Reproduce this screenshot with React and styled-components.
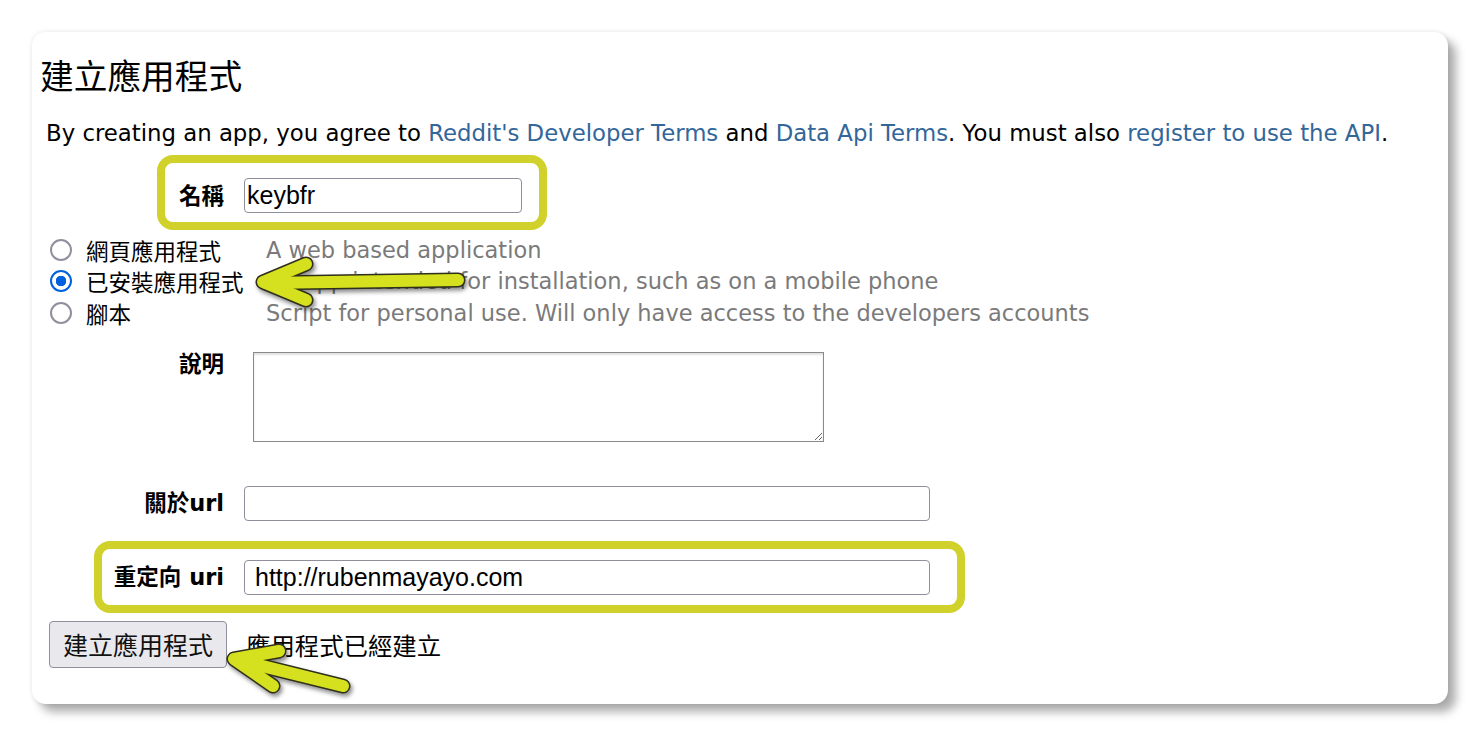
import React from "react";
import styled, { createGlobalStyle } from "styled-components";

const GlobalStyle = createGlobalStyle`
  html, body {
    margin: 0;
    background: #ffffff;
  }
  body {
    font-family: "DejaVu Sans", "Noto Sans CJK TC", sans-serif;
    color: #000;
  }
`;

function App() {
  return (
    <Page>
      <GlobalStyle />
      <Card>
        <Title>建立應用程式</Title>
        <Agreement>
          By creating an app, you agree to <Link href="#">Reddit's Developer Terms</Link> and{" "}
          <Link href="#">Data Api Terms</Link>. You must also{" "}
          <Link href="#">register to use the API</Link>.
        </Agreement>

        <FieldRow top={31}>
          <Label>名稱</Label>
          <TextInput width={278} pad={2} defaultValue="keybfr" />
        </FieldRow>

        <RadioGroup>
          <RadioRow>
            <Radio />
            <RadioLabel>網頁應用程式</RadioLabel>
            <Hint>A web based application</Hint>
          </RadioRow>
          <RadioRow>
            <Radio checked />
            <RadioLabel>已安裝應用程式</RadioLabel>
            <Hint>An app intended for installation, such as on a mobile phone</Hint>
          </RadioRow>
          <RadioRow>
            <Radio />
            <RadioLabel>腳本</RadioLabel>
            <Hint>Script for personal use. Will only have access to the developers accounts</Hint>
          </RadioRow>
        </RadioGroup>

        <FieldRow top={23} align="flex-start">
          <Label offset={-2}>說明</Label>
          <TextArea />
        </FieldRow>

        <FieldRow top={44}>
          <Label>關於url</Label>
          <TextInput width={686} pad={10} />
        </FieldRow>

        <FieldRow top={39}>
          <Label>重定向 uri</Label>
          <TextInput width={686} pad={10} defaultValue="http://rubenmayayo.com" />
        </FieldRow>

        <Actions>
          <Button>建立應用程式</Button>
          <Status>應用程式已經建立</Status>
        </Actions>
      </Card>

      <Callout left={157} top={155} width={390} height={75} />
      <Callout left={94} top={541} width={871} height={72} />

      <Overlay width="1481" height="737" viewBox="0 0 1481 737">
        <Arrow shaft="M458 280 L266 283" head="M306 264 L263 282 L306 300" />
        <Arrow shaft="M343 686 L238 660" head="M279 651 L234 659 L273 686" />
      </Overlay>
    </Page>
  );
}

function Arrow({ shaft, head }) {
  return (
    <g style={{ filter: "drop-shadow(2px 3px 2px rgba(0,0,0,0.45))" }}>
      <path d={shaft} stroke="#2f2f1c" strokeWidth="15" fill="none" strokeLinecap="round" />
      <path d={head} stroke="#2f2f1c" strokeWidth="15" fill="none" strokeLinecap="round" strokeLinejoin="round" />
      <path d={shaft} stroke="#d5e11e" strokeWidth="12" fill="none" strokeLinecap="round" />
      <path d={head} stroke="#d5e11e" strokeWidth="12" fill="none" strokeLinecap="round" strokeLinejoin="round" />
    </g>
  );
}

export default App;

const Page = styled.div`
  position: relative;
  width: 1481px;
  height: 737px;
  padding: 32px;
  box-sizing: border-box;
  overflow: hidden;
`;

const Card = styled.div`
  width: 1416px;
  height: 672px;
  box-sizing: border-box;
  padding: 26px 8px 0 8px;
  background: #fff;
  border-radius: 14px;
  box-shadow: 8px 8px 10px rgba(0, 0, 0, 0.32), 0 0 5px rgba(0, 0, 0, 0.1);
`;

const Title = styled.h1`
  margin: 0;
  font-size: 33.7px;
  line-height: 40px;
  font-weight: normal;
`;

const Agreement = styled.p`
  margin: 21px 0 0 6px;
  font-size: 22.8px;
  line-height: 28px;
`;

const Link = styled.a`
  color: #336699;
  text-decoration: none;
`;

const FieldRow = styled.div`
  display: flex;
  align-items: ${(p) => p.align || "center"};
  gap: 20px;
  margin-top: ${(p) => p.top}px;
`;

const Label = styled.label`
  width: 184px;
  flex-shrink: 0;
  text-align: right;
  font-size: 22.5px;
  font-weight: bold;
  line-height: 28px;
  margin-top: ${(p) => p.offset || 0}px;
`;

const TextInput = styled.input`
  width: ${(p) => p.width}px;
  height: 35px;
  box-sizing: border-box;
  border: 1px solid #8f8f9d;
  border-radius: 4px;
  padding: 0 ${(p) => p.pad}px;
  font-family: "Liberation Sans", Arial, sans-serif;
  font-size: 25px;
  color: #000;
  background: #fff;
  outline: none;
`;

const TextArea = styled.textarea`
  margin-left: 9px;
  width: 571px;
  height: 90px;
  box-sizing: border-box;
  border: 1px solid #8a8a8a;
  box-shadow: inset 0 2px 2px rgba(0, 0, 0, 0.12);
  padding: 4px;
  font-family: "Liberation Sans", Arial, sans-serif;
  font-size: 18px;
  resize: both;
  outline: none;
`;

const RadioGroup = styled.div`
  margin-top: 21px;
  display: flex;
  flex-direction: column;
`;

const RadioRow = styled.div`
  display: flex;
  align-items: center;
  height: 31.5px;
  font-size: 22.5px;
`;

const Radio = styled.span`
  box-sizing: border-box;
  width: 22px;
  height: 22px;
  margin: 0 14px 0 10px;
  border-radius: 50%;
  border: ${(p) => (p.checked ? "2.5px solid #0060df" : "2.5px solid #8f8f9d")};
  background: ${(p) =>
    p.checked ? "radial-gradient(circle, #0060df 0 5px, #fff 5.5px)" : "#fff"};
  flex-shrink: 0;
`;

const RadioLabel = styled.span`
  width: 180px;
  flex-shrink: 0;
`;

const Hint = styled.span`
  color: #7a7a7a;
`;

const Actions = styled.div`
  display: flex;
  align-items: center;
  gap: 19px;
  margin: 26px 0 0 9px;
`;

const Button = styled.button`
  width: 178px;
  height: 47px;
  border: 1px solid #8f8f9d;
  border-radius: 4px;
  background: #e9e9ed;
  font-family: "Noto Sans CJK TC", sans-serif;
  font-size: 25px;
  color: #111;
  padding: 0;
`;

const Status = styled.span`
  font-size: 24.4px;
`;

const Callout = styled.div`
  position: absolute;
  left: ${(p) => p.left}px;
  top: ${(p) => p.top}px;
  width: ${(p) => p.width}px;
  height: ${(p) => p.height}px;
  box-sizing: border-box;
  border: 8px solid #d0d12b;
  border-radius: 16px;
  pointer-events: none;
`;

const Overlay = styled.svg`
  position: absolute;
  left: 0;
  top: 0;
  pointer-events: none;
`;
